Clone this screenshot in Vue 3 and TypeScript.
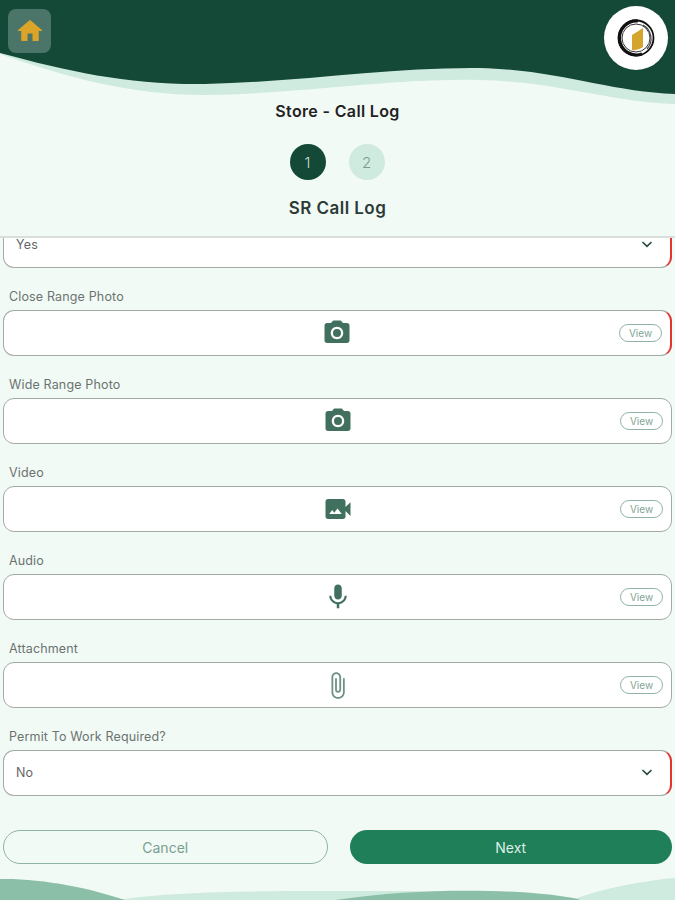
<template>
  <div class="page">
    <!-- header wave -->
    <svg class="wave-top" width="675" height="110" viewBox="0 0 675 110">
      <path d="M0 54 C70 78 130 95 205 95 C300 94 390 78 480 80 C560 82 610 102 675 104 V0 H0 Z" fill="#cfeade" />
      <path d="M0 53 C70 72 130 85 205 84 C300 82 390 67 480 68 C560 70 610 92 675 94 V0 H0 Z" fill="#134936" />
    </svg>
    <svg class="wave-bottom" width="675" height="22" viewBox="0 0 675 22">
      <path d="M572 22 C600 11 640 3 675 0 V22 Z" fill="#cfeade" />
      <path d="M115 22 C170 14 240 13 330 13 C420 13 520 12 590 22 Z" fill="#cfeade" />
      <path d="M335 22 C390 14 440 12 490 13 C530 14 560 17 581 22 Z" fill="#8bbfa7" />
      <path d="M0 1 C40 0 90 10 125 22 H0 Z" fill="#8bbfa7" />
    </svg>

    <header class="top-bar">
      <div class="home-btn">
        <svg width="30" height="30" viewBox="0 0 24 24">
          <path d="M10 20v-6h4v6h4.400a.6.6 0 0 0 .6-.6V12h2.200c.5 0 .7-.6.3-.9L12.600 3.500a.9.9 0 0 0-1.200 0L2.500 11.100c-.4.3-.2.9.3.9H5v7.400c0 .3.300.6.600.6z" fill="#dca52a" />
        </svg>
      </div>
      <div class="logo">
        <svg width="48" height="48" viewBox="0 0 48 48">
          <circle cx="24" cy="24" r="17.500" fill="none" stroke="#111" stroke-width="1.800" />
          <path d="M26 7 A17 17 0 1 0 30 40" fill="none" stroke="#111" stroke-width="3.200" />
          <circle cx="24" cy="24" r="14" fill="none" stroke="#333" stroke-width="1" />
          <path d="M31 11 A15.500 15.500 0 0 1 35 35" fill="none" stroke="#444" stroke-width="1.200" />
          <path d="M20 21 L31 14 V33 Q26 37 20 36 Z" fill="#d4a52c" />
        </svg>
      </div>
    </header>

    <h1 class="title">Store - Call Log</h1>

    <div class="steps">
      <span class="step active">1</span>
      <span class="step">2</span>
    </div>

    <h2 class="subtitle">SR Call Log</h2>

    <div class="form-area">
      <div class="form-scroll">
        <div class="field first">
          <div class="box required select">
            <span class="value">Yes</span>
            <svg class="chevron" width="14" height="14" viewBox="0 0 14 14"><path d="M2.500 5 7 9.300 11.500 5" /></svg>
          </div>
        </div>

        <div v-for="item in uploads" :key="item.label" class="field">
          <label class="label">{{ item.label }}</label>
          <div class="box upload" :class="{ required: item.required }">
            <svg class="upload-icon" :width="item.size" :height="item.size" viewBox="0 0 24 24">
              <path :d="item.path" :fill="item.color" />
            </svg>
            <span class="view">View</span>
          </div>
        </div>

        <div class="field">
          <label class="label">Permit To Work Required?</label>
          <div class="box required select">
            <span class="value">No</span>
            <svg class="chevron" width="14" height="14" viewBox="0 0 14 14"><path d="M2.500 5 7 9.300 11.500 5" /></svg>
          </div>
        </div>
      </div>
    </div>

    <div class="actions">
      <button class="btn cancel" type="button">Cancel</button>
      <button class="btn next" type="button">Next</button>
    </div>
  </div>
</template>

<script setup lang="ts">
interface UploadField {
  label: string;
  path: string;
  size: number;
  color: string;
  required?: boolean;
}

const camera =
  'M12 15.200a3.200 3.200 0 1 0 0-6.400 3.200 3.200 0 0 0 0 6.400zM9 2 7.170 4H4c-1.100 0-2 .9-2 2v12c0 1.100.9 2 2 2h16c1.100 0 2-.9 2-2V6c0-1.100-.9-2-2-2h-3.170L15 2H9zm3 15c-2.760 0-5-2.240-5-5s2.240-5 5-5 5 2.240 5 5-2.240 5-5 5z';

const uploads: UploadField[] = [
  { label: 'Close Range Photo', path: camera, size: 30, color: '#41705f', required: true },
  { label: 'Wide Range Photo', path: camera, size: 30, color: '#41705f' },
  {
    label: 'Video',
    path: 'M18 10.480V6c0-1.100-.9-2-2-2H4c-1.100 0-2 .9-2 2v12c0 1.100.9 2 2 2h12c1.100 0 2-.9 2-2v-4.480l4 3.980v-11l-4 3.980zM5 16l2.380-3.170L9 15l2.620-3.500L15 16H5z',
    size: 30,
    color: '#41705f'
  },
  {
    label: 'Audio',
    path: 'M12 14c1.660 0 3-1.340 3-3V5c0-1.660-1.340-3-3-3S9 3.340 9 5v6c0 1.660 1.340 3 3 3zm5.300-3c0 3-2.540 5.100-5.300 5.100S6.700 14 6.700 11H5c0 3.410 2.720 6.230 6 6.720V21h2v-3.280c3.280-.48 6-3.300 6-6.720h-1.700z',
    size: 30,
    color: '#41705f'
  },
  {
    label: 'Attachment',
    path: 'M16.500 6v11.500c0 2.210-1.790 4-4 4s-4-1.790-4-4V5c0-1.380 1.120-2.500 2.500-2.500s2.500 1.120 2.500 2.500v10.500c0 .55-.45 1-1 1s-1-.45-1-1V6H10v9.500c0 1.380 1.120 2.500 2.500 2.500s2.500-1.120 2.500-2.500V5c0-2.210-1.790-4-4-4S7 2.790 7 5v12.500c0 3.040 2.460 5.500 5.500 5.500s5.500-2.460 5.500-5.500V6h-1.500z',
    size: 29,
    color: '#6f9184'
  }
];
</script>

<style>
html,
body {
  margin: 0;
  background: #f2faf6;
}
</style>

<style scoped>
.page {
  position: relative;
  width: 675px;
  height: 900px;
  overflow: hidden;
  background: #f2faf6;
  font-family: Inter, "Noto Sans", sans-serif;
  color: #2b2f2d;
}

/* decorative waves */
.wave-top {
  position: absolute;
  top: 0;
  left: 0;
}
.wave-bottom {
  position: absolute;
  bottom: 0;
  left: 0;
}

.top-bar {
  position: relative;
  display: flex;
  justify-content: space-between;
  align-items: flex-start;
  height: 100px;
  padding: 6px 7px 0 8px;
  box-sizing: border-box;
}
.home-btn {
  display: flex;
  align-items: center;
  justify-content: center;
  width: 43px;
  height: 44px;
  margin-top: 3px;
  background: #4a7568;
  border-radius: 8px;
}
.logo {
  display: flex;
  align-items: center;
  justify-content: center;
  width: 64px;
  height: 64px;
  background: #fff;
  border-radius: 50%;
}

.title {
  position: relative;
  margin: 0;
  height: 22px;
  line-height: 22px;
  font-size: 16px;
  font-weight: 600;
  letter-spacing: 0.35px;
  text-align: center;
  color: #222;
}

.steps {
  display: flex;
  justify-content: center;
  gap: 23px;
  margin-top: 22px;
  padding-right: 1px;
}
.step {
  display: flex;
  align-items: center;
  justify-content: center;
  width: 36px;
  height: 36px;
  border-radius: 50%;
  background: #cfeade;
  color: #7c9a8e;
  font-size: 15px;
  font-weight: 300;
}
.step.active {
  background: #134936;
  color: #c9ddd4;
}

.subtitle {
  margin: 16px 0 0;
  height: 24px;
  line-height: 24px;
  font-size: 17px;
  font-weight: 600;
  letter-spacing: 0.45px;
  text-align: center;
  color: #2d3b36;
}

.form-area {
  height: 594px;
  margin-top: 16px;
  overflow: hidden;
  border-top: 2px solid #d9dedb;
  box-sizing: border-box;
}
.form-scroll {
  margin-top: -16px;
  padding: 0 3px;
}

.field {
  margin-bottom: 16px;
}
.label {
  display: block;
  height: 26px;
  line-height: 26px;
  padding-left: 6px;
  font-size: 12.500px;
  letter-spacing: 0.15px;
  color: #6b7370;
}

.box {
  display: flex;
  align-items: center;
  height: 46px;
  box-sizing: border-box;
  background: #fff;
  border: 1.500px solid #a3aba8;
  border-radius: 11px;
}
.box.required {
  border-right: 2px solid #e5332f;
}
.select {
  justify-content: space-between;
  padding: 0 16px 2px 12px;
}
.value {
  font-size: 12.500px;
  letter-spacing: 0.2px;
  color: #666;
}
.chevron path {
  fill: none;
  stroke: #23463a;
  stroke-width: 1.600;
}

.upload {
  position: relative;
  justify-content: center;
}
.view {
  position: absolute;
  right: 8px;
  top: 50%;
  transform: translateY(-50%);
  width: 43px;
  height: 18px;
  line-height: 16px;
  box-sizing: border-box;
  border: 1px solid #8fb3a5;
  border-radius: 9px;
  text-align: center;
  font-size: 10px;
  color: #7fa596;
}

.actions {
  display: flex;
  gap: 22px;
  padding: 0 3px;
}
.btn {
  flex: 1;
  height: 34px;
  border-radius: 17px;
  font-family: inherit;
  font-size: 14px;
  cursor: pointer;
}
.cancel {
  background: transparent;
  border: 1px solid #8fb3a5;
  color: #78a090;
}
.next {
  background: #1e7f59;
  border: none;
  color: #dff0e8;
}
</style>
